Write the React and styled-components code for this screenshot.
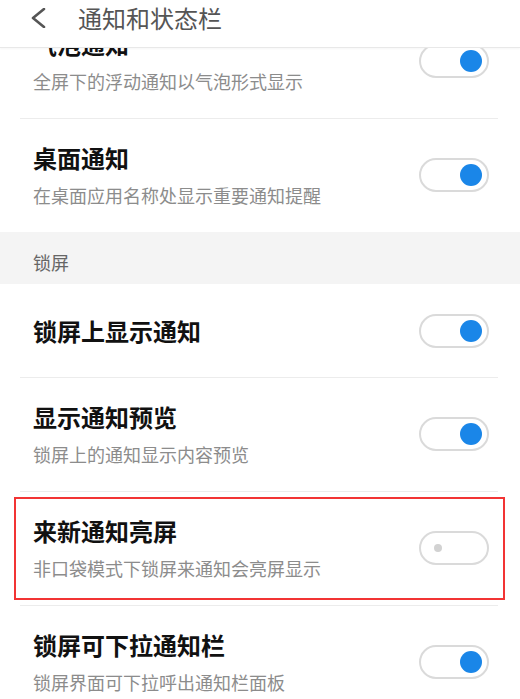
import React from 'react'
import styled, { createGlobalStyle } from 'styled-components'

const GlobalStyle = createGlobalStyle`
  html, body {
    margin: 0;
    padding: 0;
    background: #fff;
  }
  body {
    font-family: "Noto Sans CJK SC", "Noto Sans", sans-serif;
    -webkit-font-smoothing: antialiased;
  }
`

const Page = styled.div`
  width: 520px;
  height: 699px;
  overflow: hidden;
  background: #fff;
  display: flex;
  flex-direction: column;
`

const Header = styled.header`
  flex: 0 0 auto;
  height: 48px;
  box-sizing: border-box;
  display: flex;
  align-items: flex-start;
  padding: 2px 0 0 30px;
  border-bottom: 1px solid #e8e8e8;
  box-shadow: 0 1px 2px rgba(0, 0, 0, 0.04);
`

const BackButton = styled.button`
  border: 0;
  background: none;
  padding: 0;
  width: 20px;
  height: 32px;
  display: flex;
  align-items: center;
  cursor: pointer;
`

const Title = styled.h1`
  margin: 0 0 0 28px;
  font-size: 24px;
  line-height: 32px;
  font-weight: 400;
  color: #555;
`

const Viewport = styled.div`
  flex: 1 1 auto;
  overflow: hidden;
`

const Content = styled.div`
  margin-top: -43px;
`

const Row = styled.div`
  position: relative;
`

const RowInner = styled.div`
  margin: 0 22px 0 20px;
  padding: ${p => (p.$single ? '30px 9px 29px 13px' : '24px 9px 25px 13px')};
  display: flex;
  align-items: center;
  justify-content: space-between;
  border-bottom: ${p => (p.$last ? '0' : '1px solid #ececec')};
`

const Texts = styled.div`
  display: flex;
  flex-direction: column;
`

const ItemTitle = styled.div`
  font-size: 24px;
  line-height: 30px;
  font-weight: 700;
  color: #111;
`

const ItemSub = styled.div`
  margin-top: 10px;
  font-size: 18px;
  line-height: 24px;
  color: #8c8c8c;
`

const Section = styled.div`
  background: #f4f4f4;
  height: 52px;
  box-sizing: border-box;
  padding: 18px 0 0 33px;
  font-size: 18px;
  line-height: 24px;
  color: #666;
`

const Track = styled.div`
  flex: 0 0 auto;
  width: 70px;
  height: 34px;
  box-sizing: border-box;
  border: 2.5px solid #dadada;
  border-radius: 17px;
  background: #fff;
  display: flex;
  align-items: center;
  justify-content: ${p => (p.$on ? 'flex-end' : 'flex-start')};
  padding: ${p => (p.$on ? '0 5px' : '0 13px')};
`

const Thumb = styled.div`
  width: ${p => (p.$on ? '22px' : '8px')};
  height: ${p => (p.$on ? '22px' : '8px')};
  border-radius: 50%;
  background: ${p => (p.$on ? '#1a86e8' : '#d2d2d2')};
`

const Highlight = styled.div`
  position: absolute;
  left: 14px;
  right: 15px;
  top: 5px;
  bottom: 6px;
  border: 2px solid #f23434;
  pointer-events: none;
`

const Toggle = ({ on }) => (
  <Track $on={on}>
    <Thumb $on={on} />
  </Track>
)

const Item = ({ title, sub, on, last, highlight }) => (
  <Row>
    <RowInner $single={!sub} $last={last}>
      <Texts>
        <ItemTitle>{title}</ItemTitle>
        {sub && <ItemSub>{sub}</ItemSub>}
      </Texts>
      <Toggle on={on} />
    </RowInner>
    {highlight && <Highlight />}
  </Row>
)

export default function App() {
  return (
    <Page>
      <GlobalStyle />
      <Header>
        <BackButton aria-label="返回">
          <svg width="16" height="20" viewBox="0 0 16 20">
            <path d="M14 1 L3 10 L14 19" fill="none" stroke="#555" strokeWidth="2.6" strokeLinecap="round" strokeLinejoin="round" />
          </svg>
        </BackButton>
        <Title>通知和状态栏</Title>
      </Header>
      <Viewport>
        <Content>
          <Item title="气泡通知" sub="全屏下的浮动通知以气泡形式显示" on />
          <Item title="桌面通知" sub="在桌面应用名称处显示重要通知提醒" on last />
          <Section>锁屏</Section>
          <Item title="锁屏上显示通知" on />
          <Item title="显示通知预览" sub="锁屏上的通知显示内容预览" on />
          <Item title="来新通知亮屏" sub="非口袋模式下锁屏来通知会亮屏显示" on={false} highlight />
          <Item title="锁屏可下拉通知栏" sub="锁屏界面可下拉呼出通知栏面板" on />
        </Content>
      </Viewport>
    </Page>
  )
}
